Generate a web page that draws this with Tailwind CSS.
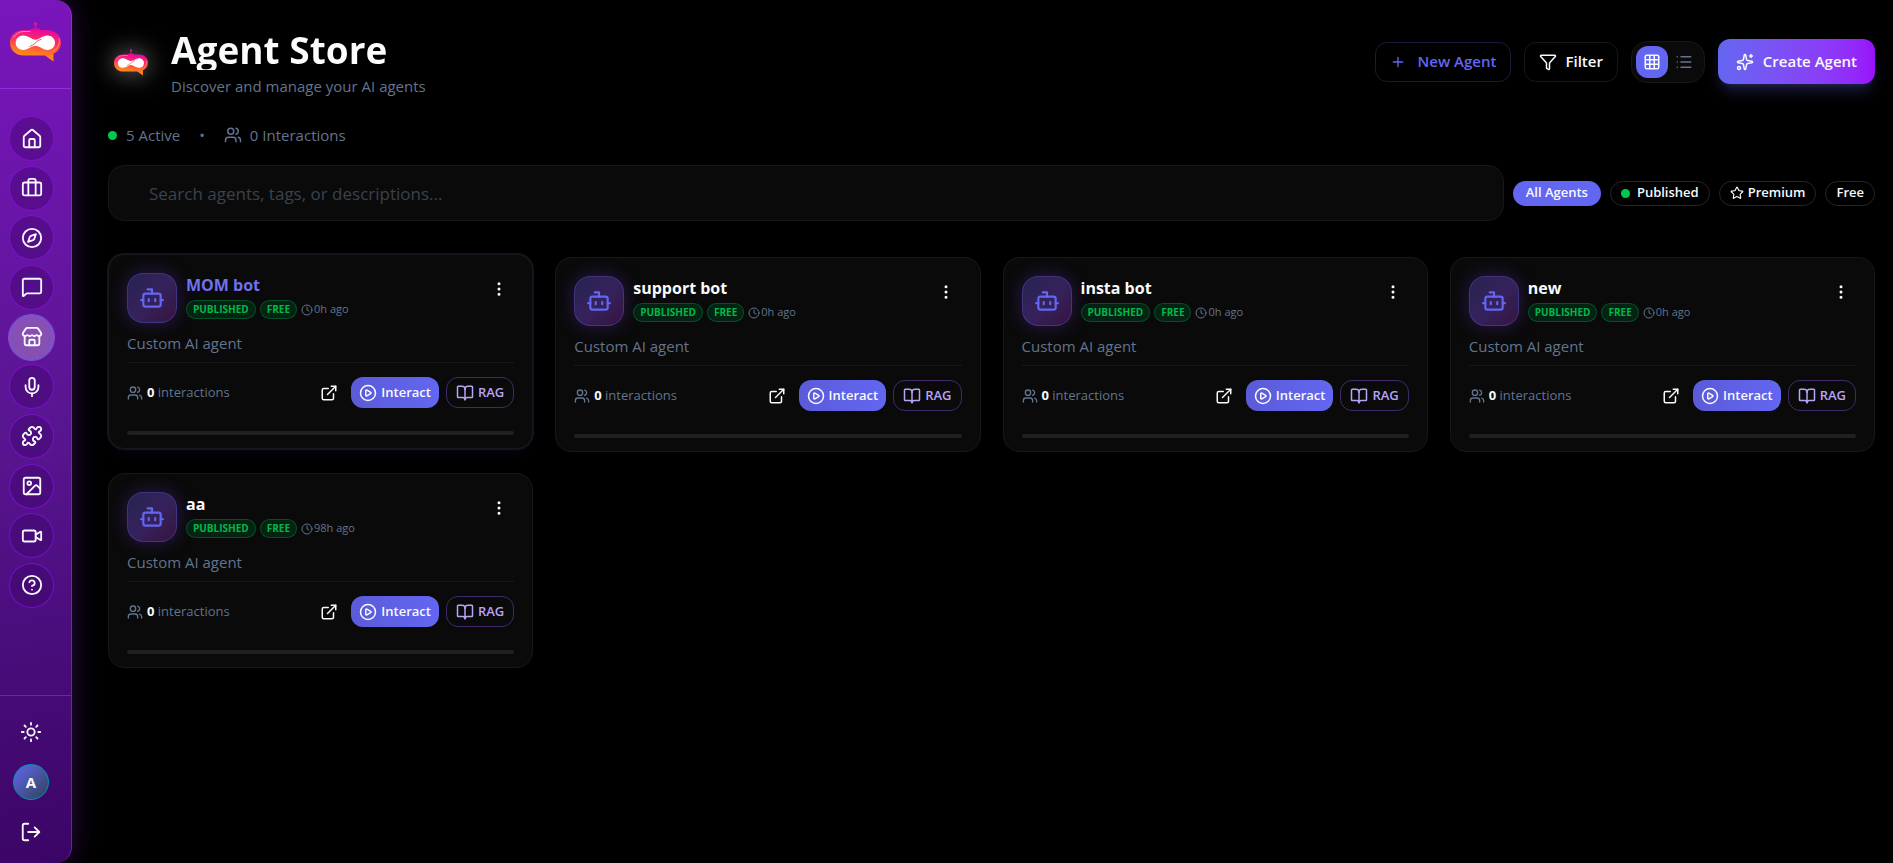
<!DOCTYPE html>
<html lang="en">
<head>
    <meta charset="UTF-8">
    <meta name="viewport" content="width=device-width, initial-scale=1.0">
    <title>Agent Store</title>
    <script src="https://cdn.jsdelivr.net/npm/@tailwindcss/browser@4"></script>
</head>
<body class="bg-black min-h-screen flex font-['Open_Sans','Noto_Sans',sans-serif] text-slate-50">

    <!-- Icon sprite -->
    <svg class="absolute size-0" aria-hidden="true" xmlns="http://www.w3.org/2000/svg">
        <defs>
            <linearGradient id="logoFill" x1="0.35" y1="1" x2="0.6" y2="0">
                <stop offset="0" stop-color="#ff9a0d" />
                <stop offset="0.3" stop-color="#ff7a22" />
                <stop offset="0.65" stop-color="#ff2f63" />
                <stop offset="1" stop-color="#e8099a" />
            </linearGradient>
        </defs>
        <symbol id="logo" viewBox="0 0 51 40">
            <circle cx="25.500" cy="2" r="1.700" fill="#e0149c" />
            <path d="M25.500 3v5" stroke="#e0149c" stroke-width="1.200" />
            <path d="M20 9c1-3 3-2.500 5.500-3 2.500.5 4.500 0 5.500 3z" fill="#d60f96" />
            <path d="M14 8h23c8 0 14 5 14 12.500 0 5.500-3 9-7.500 11.200L43.500 39.500 35 33.500H14C6 33.500 0 28.500 0 20.700S6 8 14 8z" fill="url(#logoFill)" />
            <path d="M4 15c2-3.500 5.500-5.500 10-5.500h6" fill="none" stroke="#ff8fa8" stroke-width="0.900" stroke-linecap="round" />
            <path d="M49.200 17c1 6-2 10-6 12" fill="none" stroke="#ffa74a" stroke-width="0.900" stroke-linecap="round" />
            <path d="M13 13.500c5.500 0 8.500 4.200 12.500 4.200s7-4.200 12-4.200c4.500 0 7.500 3.300 7.500 7.200s-3 7.200-7.500 7.200c-5 0-8-4.200-12-4.200s-7 4.200-12.500 4.200c-4.200 0-7.300-3.300-7.300-7.200s3.100-7.200 7.300-7.200z" fill="#fff" />
            <path d="M19.500 24.500c5-1 6.500-6 12-7.500" fill="none" stroke="#f4653c" stroke-width="1" />
        </symbol>
        <symbol id="house" viewBox="0 0 24 24"><path d="M15 21v-8a1 1 0 0 0-1-1h-4a1 1 0 0 0-1 1v8" /><path d="M3 10a2 2 0 0 1 .709-1.528l7-6a2 2 0 0 1 2.582 0l7 6A2 2 0 0 1 21 10v9a2 2 0 0 1-2 2H5a2 2 0 0 1-2-2z" /></symbol>
        <symbol id="briefcase" viewBox="0 0 24 24"><rect x="2" y="6" width="20" height="14" rx="2" /><path d="M16 20V4a2 2 0 0 0-2-2h-4a2 2 0 0 0-2 2v16" /></symbol>
        <symbol id="compass" viewBox="0 0 24 24"><circle cx="12" cy="12" r="10" /><path d="m16.240 7.760-1.804 5.411a2 2 0 0 1-1.265 1.265L7.760 16.240l1.804-5.411a2 2 0 0 1 1.265-1.265z" /></symbol>
        <symbol id="message" viewBox="0 0 24 24"><path d="M22 17a2 2 0 0 1-2 2H6.828a2 2 0 0 0-1.414.586l-2.202 2.202A.71.71 0 0 1 2 21.286V5a2 2 0 0 1 2-2h16a2 2 0 0 1 2 2z" /></symbol>
        <symbol id="store" viewBox="0 0 24 24"><path d="M15 21v-5a1 1 0 0 0-1-1h-4a1 1 0 0 0-1 1v5" /><path d="M17.774 10.310a1.120 1.120 0 0 0-1.549 0 2.500 2.500 0 0 1-3.451 0 1.120 1.120 0 0 0-1.548 0 2.500 2.500 0 0 1-3.452 0 1.120 1.120 0 0 0-1.549 0 2.500 2.500 0 0 1-3.770-3.248l2.889-4.184A2 2 0 0 1 7 2h10a2 2 0 0 1 1.653.873l2.895 4.192a2.500 2.500 0 0 1-3.774 3.244" /><path d="M4 10.950V19a2 2 0 0 0 2 2h12a2 2 0 0 0 2-2v-8.050" /></symbol>
        <symbol id="mic" viewBox="0 0 24 24"><path d="M12 19v3" /><path d="M19 10v2a7 7 0 0 1-14 0v-2" /><rect x="9" y="2" width="6" height="13" rx="3" /></symbol>
        <symbol id="puzzle" viewBox="0 0 24 24"><path d="M15.390 4.390a1 1 0 0 0 1.680-.474 2.500 2.500 0 1 1 3.014 3.015 1 1 0 0 0-.474 1.680l1.683 1.682a2.414 2.414 0 0 1 0 3.414L19.610 15.390a1 1 0 0 1-1.680-.474 2.500 2.500 0 1 0-3.014 3.015 1 1 0 0 1 .474 1.680l-1.683 1.682a2.414 2.414 0 0 1-3.414 0L8.610 19.610a1 1 0 0 0-1.680.474 2.500 2.500 0 1 1-3.014-3.015 1 1 0 0 0 .474-1.680l-1.683-1.682a2.414 2.414 0 0 1 0-3.414L4.390 8.610a1 1 0 0 1 1.680.474 2.500 2.500 0 1 0 3.014-3.015 1 1 0 0 1-.474-1.680l1.683-1.682a2.414 2.414 0 0 1 3.414 0z" /></symbol>
        <symbol id="image" viewBox="0 0 24 24"><rect x="3" y="3" width="18" height="18" rx="2" /><circle cx="9" cy="9" r="2" /><path d="m21 15-3.086-3.086a2 2 0 0 0-2.828 0L6 21" /></symbol>
        <symbol id="video" viewBox="0 0 24 24"><path d="m16 13 5.223 3.482a.5.5 0 0 0 .777-.416V7.870a.5.5 0 0 0-.752-.432L16 10.500" /><rect x="2" y="6" width="14" height="12" rx="2" /></symbol>
        <symbol id="help" viewBox="0 0 24 24"><circle cx="12" cy="12" r="10" /><path d="M9.090 9a3 3 0 0 1 5.830 1c0 2-3 3-3 3" /><path d="M12 17h.01" /></symbol>
        <symbol id="sun" viewBox="0 0 24 24"><circle cx="12" cy="12" r="4" /><path d="M12 2v2M12 20v2M4.930 4.930l1.410 1.410M17.660 17.660l1.410 1.410M2 12h2M20 12h2M6.340 17.660l-1.410 1.410M19.070 4.930l-1.410 1.410" /></symbol>
        <symbol id="logout" viewBox="0 0 24 24"><path d="m16 17 5-5-5-5" /><path d="M21 12H9" /><path d="M9 21H5a2 2 0 0 1-2-2V5a2 2 0 0 1 2-2h4" /></symbol>
        <symbol id="plus" viewBox="0 0 24 24"><path d="M5 12h14M12 5v14" /></symbol>
        <symbol id="funnel" viewBox="0 0 24 24"><path d="M10 20a1 1 0 0 0 .553.895l2 1A1 1 0 0 0 14 21v-7a2 2 0 0 1 .517-1.341L21.740 4.670A1 1 0 0 0 21 3H3a1 1 0 0 0-.742 1.670l7.225 7.989A2 2 0 0 1 10 14z" /></symbol>
        <symbol id="grid" viewBox="0 0 24 24"><rect x="3" y="3" width="18" height="18" rx="2" /><path d="M3 9h18M3 15h18M9 3v18M15 3v18" /></symbol>
        <symbol id="list" viewBox="0 0 24 24"><path d="M3 5h.01M3 12h.01M3 19h.01M8 5h13M8 12h13M8 19h13" /></symbol>
        <symbol id="sparkles" viewBox="0 0 24 24"><path d="M11.017 2.814a1 1 0 0 1 1.966 0l1.051 5.558a2 2 0 0 0 1.594 1.594l5.558 1.051a1 1 0 0 1 0 1.966l-5.558 1.051a2 2 0 0 0-1.594 1.594l-1.051 5.558a1 1 0 0 1-1.966 0l-1.051-5.558a2 2 0 0 0-1.594-1.594l-5.558-1.051a1 1 0 0 1 0-1.966l5.558-1.051a2 2 0 0 0 1.594-1.594z" /><path d="M20 2v4M22 4h-4" /><circle cx="4" cy="20" r="2" /></symbol>
        <symbol id="users" viewBox="0 0 24 24"><path d="M16 21v-2a4 4 0 0 0-4-4H6a4 4 0 0 0-4 4v2" /><path d="M16 3.128a4 4 0 0 1 0 7.744" /><path d="M22 21v-2a4 4 0 0 0-3-3.870" /><circle cx="9" cy="7" r="4" /></symbol>
        <symbol id="star" viewBox="0 0 24 24"><path d="M11.525 2.295a.53.53 0 0 1 .950 0l2.310 4.679a2.123 2.123 0 0 0 1.595 1.160l5.166.756a.53.53 0 0 1 .294.904l-3.736 3.638a2.123 2.123 0 0 0-.611 1.878l.882 5.140a.53.53 0 0 1-.771.560l-4.618-2.428a2.122 2.122 0 0 0-1.973 0L6.396 21.010a.53.53 0 0 1-.770-.560l.881-5.139a2.122 2.122 0 0 0-.611-1.879L2.160 9.795a.53.53 0 0 1 .294-.906l5.165-.755a2.122 2.122 0 0 0 1.597-1.160z" /></symbol>
        <symbol id="bot" viewBox="0 0 24 24"><path d="M12 8V4H8" /><rect x="4" y="8" width="16" height="12" rx="2" /><path d="M2 14h2M20 14h2M15 13v2M9 13v2" /></symbol>
        <symbol id="clock" viewBox="0 0 24 24"><circle cx="12" cy="12" r="10" /><path d="M12 6v6l4 2" /></symbol>
        <symbol id="dots" viewBox="0 0 24 24"><circle cx="12" cy="12" r="1" /><circle cx="12" cy="5" r="1" /><circle cx="12" cy="19" r="1" /></symbol>
        <symbol id="external" viewBox="0 0 24 24"><path d="M15 3h6v6" /><path d="M10 14 21 3" /><path d="M18 13v6a2 2 0 0 1-2 2H5a2 2 0 0 1-2-2V8a2 2 0 0 1 2-2h6" /></symbol>
        <symbol id="play" viewBox="0 0 24 24"><circle cx="12" cy="12" r="10" /><path d="M9 9.003a1 1 0 0 1 1.517-.859l4.997 2.997a1 1 0 0 1 0 1.718l-4.997 2.997A1 1 0 0 1 9 14.996z" /></symbol>
        <symbol id="book" viewBox="0 0 24 24"><path d="M12 7v14" /><path d="M3 18a1 1 0 0 1-1-1V4a1 1 0 0 1 1-1h5a4 4 0 0 1 4 4 4 4 0 0 1 4-4h5a1 1 0 0 1 1 1v13a1 1 0 0 1-1 1h-6a3 3 0 0 0-3 3 3 3 0 0 0-3-3z" /></symbol>
    </svg>

    <!-- Sidebar -->
    <aside class="w-[72px] shrink-0 flex flex-col rounded-r-2xl border-r border-purple-500/40 bg-linear-170 from-[#7a15bd] via-[#581590] to-[#3b0566] shadow-[4px_0_24px_rgba(126,34,206,0.25)]">
        <a href="#" aria-label="Home page" class="h-[89px] flex items-center justify-center border-b border-purple-500/50 pb-1">
            <svg class="w-[51px] h-10"><use href="#logo" /></svg>
        </a>
        <nav id="sideNav" class="h-[519px] pt-[27px] pl-[9px] flex flex-col justify-between"></nav>
        <div class="mt-auto h-[168px] pt-[18px] pl-[13px] flex flex-col gap-[14px] border-t border-purple-500/40">
            <button type="button" aria-label="Toggle theme" class="size-9 flex items-center justify-center">
                <svg class="size-[22px] fill-none stroke-current stroke-2 [stroke-linecap:round] [stroke-linejoin:round]"><use href="#sun" /></svg>
            </button>
            <button type="button" aria-label="Account" class="size-9 rounded-full border border-cyan-600 bg-linear-135 from-[#6366f1] to-slate-700 text-[15px] font-bold">A</button>
            <button type="button" aria-label="Log out" class="size-9 flex items-center justify-center">
                <svg class="size-[22px] fill-none stroke-current stroke-2 [stroke-linecap:round] [stroke-linejoin:round]"><use href="#logout" /></svg>
            </button>
        </div>
    </aside>

    <main class="flex-1 min-w-0 pt-[30px] pl-9 pr-[18px]">
        <header class="flex items-center justify-between">
            <div class="flex items-center gap-[18px]">
                <div class="size-[45px] mb-1 flex items-center justify-center">
                    <svg class="w-[34px] h-[27px] overflow-visible drop-shadow-[0_0_12px_rgba(255,255,255,0.5)]"><use href="#logo" /></svg>
                </div>
                <div>
                    <h1 class="text-[37px] leading-10 font-bold bg-linear-to-r from-slate-50 to-white bg-clip-text text-transparent">Agent Store</h1>
                    <p class="mt-1 text-[15px] leading-6 text-slate-500">Discover and manage your AI agents</p>
                </div>
            </div>
            <div class="flex items-center gap-[13px] pb-[5px]">
                <button type="button" class="h-10 px-[14px] flex items-center gap-3 rounded-xl border border-[#6366f1]/25 text-[15px] font-semibold text-[#6366f1]">
                    <svg class="size-4 fill-none stroke-current stroke-2 [stroke-linecap:round]"><use href="#plus" /></svg>
                    New Agent
                </button>
                <button type="button" class="h-10 px-[14px] flex items-center gap-2 rounded-xl border border-neutral-900 text-[15px] font-semibold">
                    <svg class="size-[18px] fill-none stroke-current stroke-2 [stroke-linejoin:round]"><use href="#funnel" /></svg>
                    Filter
                </button>
                <div class="h-[42px] px-1 flex items-center rounded-2xl border border-neutral-900 bg-[#0a0a0a]">
                    <button type="button" aria-label="Grid view" class="size-8 flex items-center justify-center rounded-xl bg-[#6366f1]">
                        <svg class="size-[18px] fill-none stroke-current stroke-2"><use href="#grid" /></svg>
                    </button>
                    <button type="button" aria-label="List view" class="size-8 flex items-center justify-center rounded-xl text-slate-500">
                        <svg class="size-[18px] fill-none stroke-current stroke-2 [stroke-linecap:round]"><use href="#list" /></svg>
                    </button>
                </div>
                <button type="button" class="h-[45px] px-[18px] flex items-center gap-[9px] rounded-xl bg-linear-to-r from-[#6366f1] to-[#9810fa] text-[15px] font-semibold shadow-lg shadow-[#6366f1]/25">
                    <svg class="size-[18px] fill-none stroke-current stroke-2 [stroke-linecap:round] [stroke-linejoin:round]"><use href="#sparkles" /></svg>
                    Create Agent
                </button>
            </div>
        </header>

        <div class="mt-[25px] flex items-center text-[15px] leading-6 text-slate-500">
            <span class="size-[9px] mr-[9px] rounded-full bg-[#00c950]"></span>
            <span>5 Active</span>
            <span class="mx-[19px]">•</span>
            <svg class="size-[18px] mr-2 fill-none stroke-current stroke-2 [stroke-linecap:round] [stroke-linejoin:round]"><use href="#users" /></svg>
            <span>0 Interactions</span>
        </div>

        <div class="mt-[18px] flex items-center gap-[9px]">
            <input type="search" aria-label="Search agents" placeholder="Search agents, tags, or descriptions..."
                class="flex-1 min-w-0 h-14 px-10 rounded-2xl border border-neutral-900 bg-[#0a0a0a] text-[17px] placeholder:text-[#3b424e]" />
            <div class="flex gap-[9px] text-[13px] font-semibold">
                <button type="button" class="h-[25px] px-[13px] rounded-full bg-[#6366f1]">All Agents</button>
                <button type="button" class="h-[25px] px-[10px] flex items-center gap-[7px] rounded-full border border-neutral-800">
                    <span class="size-[9px] rounded-full bg-[#00c950]"></span>
                    Published
                </button>
                <button type="button" class="h-[25px] px-[10px] flex items-center gap-1 rounded-full border border-neutral-800">
                    <svg class="size-[14px] fill-none stroke-current stroke-2 [stroke-linejoin:round]"><use href="#star" /></svg>
                    Premium
                </button>
                <button type="button" class="h-[25px] px-[10px] rounded-full border border-neutral-800">Free</button>
            </div>
        </div>

        <section id="agentGrid" class="mt-9 grid grid-cols-[repeat(auto-fill,minmax(400px,1fr))] gap-x-[22px] gap-y-[21px]"></section>
    </main>

    <script>
        const navItems = [
            { icon: 'house', label: 'Home' },
            { icon: 'briefcase', label: 'Workspace' },
            { icon: 'compass', label: 'Explore' },
            { icon: 'message', label: 'Chat' },
            { icon: 'store', label: 'Agent Store', active: true },
            { icon: 'mic', label: 'Voice' },
            { icon: 'puzzle', label: 'Integrations' },
            { icon: 'image', label: 'Images' },
            { icon: 'video', label: 'Video' },
            { icon: 'help', label: 'Help' },
        ];

        const agents = [
            { name: 'MOM bot', age: '0h ago', hovered: true },
            { name: 'support bot', age: '0h ago' },
            { name: 'insta bot', age: '0h ago' },
            { name: 'new', age: '0h ago' },
            { name: 'aa', age: '98h ago' },
        ];

        document.getElementById('sideNav').innerHTML = navItems.map((item) => `
            <a href="#" aria-label="${item.label}" class="size-[45px] flex items-center justify-center rounded-full border ${
                item.active ? 'border-[#6366f1] bg-white/25 ring-1 ring-purple-400/50' : 'border-purple-600/60 bg-purple-950/40'
            }">
                <svg class="size-[22px] fill-none stroke-current stroke-2 [stroke-linecap:round] [stroke-linejoin:round]"><use href="#${item.icon}" /></svg>
            </a>
        `).join('');

        document.getElementById('agentGrid').innerHTML = agents.map((agent) => `
            <article class="px-[18px] pt-[18px] pb-[13px] rounded-2xl border bg-[#0a0a0a] ${
                agent.hovered ? '-translate-y-[3px] border-[#17171f] ring-1 ring-[#14141c] shadow-lg shadow-[#6366f1]/5' : 'border-neutral-900'
            }">
                <div class="flex items-start gap-[9px]">
                    <div class="size-[50px] shrink-0 flex items-center justify-center rounded-2xl border border-[#6366f1]/30 bg-linear-135 from-[#26234f] via-[#35225c] to-[#35143f] text-[#6366f1] shadow-[0_0_18px_rgba(124,58,237,0.3)]">
                        <svg class="size-[26px] fill-none stroke-current stroke-2 [stroke-linecap:round] [stroke-linejoin:round]"><use href="#bot" /></svg>
                    </div>
                    <div class="flex-1 min-w-0">
                        <h3 class="text-base leading-6 font-bold ${agent.hovered ? 'text-[#7170f0]' : ''}">${agent.name}</h3>
                        <div class="mt-[3px] flex items-center gap-1 text-[11px]">
                            <span class="h-[19px] px-[6px] flex items-center rounded-full border border-green-800/70 bg-green-950/70 text-[10px] font-bold text-[#00b84a]">PUBLISHED</span>
                            <span class="h-[19px] px-[6px] flex items-center rounded-full border border-green-800/70 bg-green-950/70 text-[10px] font-bold text-[#00b84a]">FREE</span>
                            <span class="flex items-center gap-px text-slate-500">
                                <svg class="size-3 fill-none stroke-current stroke-2 [stroke-linecap:round]"><use href="#clock" /></svg>
                                ${agent.age}
                            </span>
                        </div>
                    </div>
                    <button type="button" aria-label="More options" class="size-[31px] flex items-center justify-center">
                        <svg class="size-[18px] fill-none stroke-current stroke-2"><use href="#dots" /></svg>
                    </button>
                </div>
                <p class="mt-2 text-[15px] leading-6 text-slate-500">Custom AI agent</p>
                <div class="mt-[7px] pt-[14px] flex items-center border-t border-neutral-900">
                    <svg class="size-4 mr-1 fill-none stroke-slate-500 stroke-2 [stroke-linecap:round] [stroke-linejoin:round]"><use href="#users" /></svg>
                    <p class="text-[13px] text-slate-500"><b class="text-slate-50">0</b> interactions</p>
                    <a href="#" aria-label="Open agent" class="ml-auto mr-[13px] size-[18px]">
                        <svg class="size-[18px] fill-none stroke-current stroke-2 [stroke-linecap:round] [stroke-linejoin:round]"><use href="#external" /></svg>
                    </a>
                    <button type="button" class="h-[31px] px-2 flex items-center gap-1 rounded-xl bg-linear-to-r from-[#5b5bd8] to-[#6366f1] text-[13px] font-semibold">
                        <svg class="size-[18px] fill-none stroke-current stroke-2 [stroke-linejoin:round]"><use href="#play" /></svg>
                        Interact
                    </button>
                    <button type="button" class="ml-[7px] h-[31px] px-[9px] flex items-center gap-1 rounded-xl border border-[#8b5cf6]/40 text-[13px] font-semibold text-[#b9a3f5]">
                        <svg class="size-[18px] fill-none stroke-current stroke-2 [stroke-linecap:round] [stroke-linejoin:round]"><use href="#book" /></svg>
                        RAG
                    </button>
                </div>
                <div class="mt-[23px] h-1 rounded-full bg-neutral-800/80"></div>
            </article>
        `).join('');
    </script>
</body>
</html>
